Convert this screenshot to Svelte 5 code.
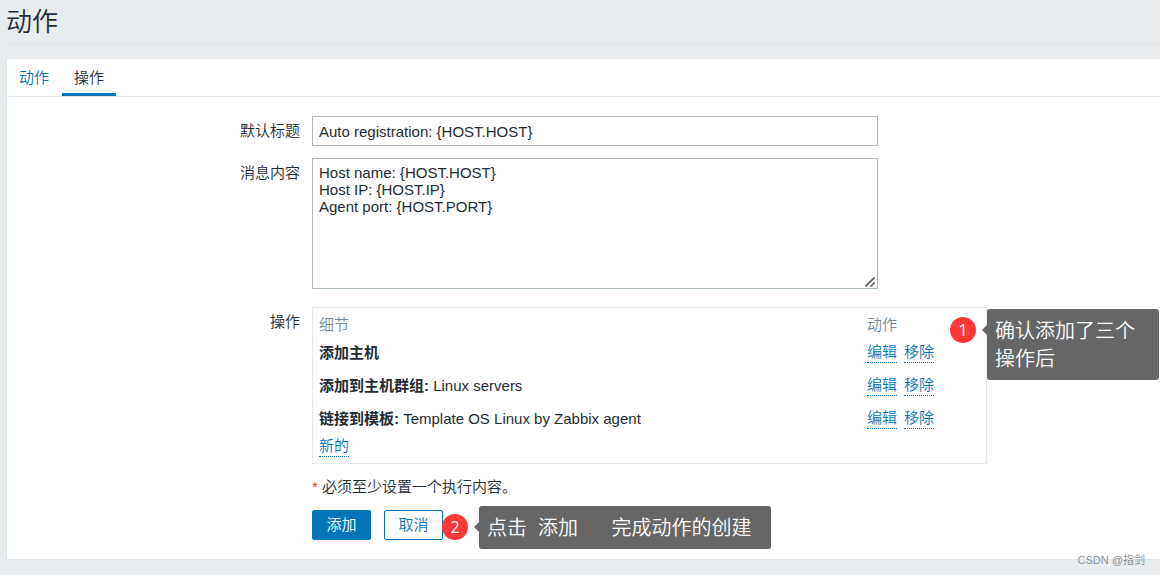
<script>
  let subject = $state('Auto registration: {HOST.HOST}');
  let message = $state('Host name: {HOST.HOST}\nHost IP: {HOST.IP}\nAgent port: {HOST.PORT}');

  const operations = [
    { kind: '添加主机', target: '' },
    { kind: '添加到主机群组:', target: 'Linux servers' },
    { kind: '链接到模板:', target: 'Template OS Linux by Zabbix agent' }
  ];
</script>

<div class="page">
  <header>
    <h1>动作</h1>
  </header>

  <main>
    <nav>
      <a class="tab" href="#action">动作</a>
      <a class="tab selected" href="#operations">操作</a>
    </nav>

    <form onsubmit={(e) => e.preventDefault()}>
      <label for="subject">默认标题</label>
      <input id="subject" type="text" bind:value={subject} />

      <label for="message">消息内容</label>
      <div class="area">
        <textarea id="message" bind:value={message}></textarea>
        <svg class="grip" viewBox="0 0 10 10" width="10" height="10" aria-hidden="true">
          <path d="M0.5 9.5 L9.5 0.5 M5.5 9.5 L9.5 5.5" fill="none" stroke="#555" stroke-width="1.6" />
        </svg>
      </div>

      <span class="label" id="ops-label">操作</span>
      <div class="operations">
        <table aria-labelledby="ops-label">
          <thead>
            <tr><th class="detail">细节</th><th>动作</th></tr>
          </thead>
          <tbody>
            {#each operations as op}
              <tr>
                <td><b>{op.kind}{op.target ? ' ' : ''}</b>{op.target}</td>
                <td>
                  <div class="links">
                    <button type="button" class="link">编辑</button>
                    <button type="button" class="link">移除</button>
                  </div>
                </td>
              </tr>
            {/each}
          </tbody>
          <tfoot>
            <tr><td colspan="2"><button type="button" class="link">新的</button></td></tr>
          </tfoot>
        </table>
        <span class="badge first">1</span>
        <div class="callout first">确认添加了三个<br />操作后</div>
      </div>

      <p class="note"><span class="star">*</span> 必须至少设置一个执行内容。</p>

      <div class="buttons">
        <button type="submit" class="btn primary">添加</button>
        <button type="button" class="btn">取消</button>
        <span class="badge second">2</span>
        <div class="callout second">{'点击  添加      完成动作的创建'}</div>
      </div>
    </form>
  </main>

  <div class="watermark">CSDN @指剑</div>
</div>

<style>
  :global(body) {
    background: #e9edf0;
  }

  .page {
    position: relative;
    box-sizing: border-box;
    min-height: 100vh;
    padding: 0 0 15px 6px;
    overflow: hidden;
    color: #1f2c33;
    font: 350 15px/22px "Liberation Sans", "Noto Sans CJK SC", sans-serif;
  }

  header {
    padding: 4px 0;
    margin-bottom: 13px;
    border-bottom: 1px solid #dfe4e7;
  }

  h1 {
    margin: 0;
    font-size: 26px;
    line-height: 36px;
    font-weight: 350;
  }

  main {
    background: #fff;
    border: 1px solid #dfe4e7;
    border-right: 0;
  }

  nav {
    display: flex;
    gap: 1px;
    border-bottom: 1px solid #e6eaed;
  }

  .tab {
    padding: 8px 12px 4px;
    border-bottom: 3px solid transparent;
    color: #0275b8;
    text-decoration: none;
  }

  .tab.selected {
    border-color: #0275b8;
    color: #1f2c33;
  }

  form {
    display: grid;
    grid-template-columns: 293px minmax(0, 1fr);
    column-gap: 12px;
    padding: 19px 0;
  }

  label,
  .label {
    padding-top: 4px;
    text-align: right;
  }

  input,
  textarea {
    box-sizing: border-box;
    display: block;
    width: 100%;
    margin: 0;
    border: 1px solid #acbbc2;
    border-radius: 0;
    outline: 0;
    background: #fff;
    color: inherit;
    font: inherit;
  }

  input {
    max-width: 566px;
    height: 30px;
    margin-bottom: 12px;
    padding: 0 6px;
  }

  .area {
    position: relative;
    max-width: 566px;
    margin-bottom: 18px;
  }

  textarea {
    height: 131px;
    padding: 5px 6px;
    line-height: 17px;
    resize: none;
  }

  .grip {
    position: absolute;
    right: 3px;
    bottom: 2px;
  }

  .operations {
    position: relative;
    box-sizing: border-box;
    width: 100%;
    max-width: 675px;
    padding: 6px;
    border: 1px solid #e6eaed;
  }

  table {
    width: 100%;
    table-layout: fixed;
    border-collapse: collapse;
  }

  th,
  td {
    height: 22px;
    padding: 0;
    text-align: left;
  }

  th {
    color: #768d99;
    font-weight: 350;
  }

  .detail {
    width: 548px;
  }

  tbody td {
    height: 33px;
  }

  b {
    font-weight: 700;
    white-space: pre;
  }

  .links {
    display: flex;
    gap: 7px;
  }

  .link {
    display: block;
    padding: 0;
    border: 0;
    border-bottom: 1px dotted #0275b8;
    background: none;
    color: #0275b8;
    font: inherit;
    line-height: 20px;
    cursor: pointer;
  }

  .note,
  .buttons {
    grid-column: 2;
  }

  .note {
    margin: 12px 0;
  }

  .star {
    color: #e33734;
  }

  .buttons {
    position: relative;
    display: flex;
    gap: 13px;
  }

  .btn {
    min-width: 59px;
    height: 30px;
    padding: 0 13px;
    border: 1px solid #0275b8;
    border-radius: 2px;
    background: #fff;
    color: #0275b8;
    font: inherit;
    cursor: pointer;
  }

  .btn.primary {
    background: #0275b8;
    color: #fff;
  }

  .badge {
    position: absolute;
    width: 26px;
    border-radius: 50%;
    background: #fe3737;
    color: #fff;
    font: 16px/26px "Open Sans", sans-serif;
    text-align: center;
  }

  .badge.first {
    top: 9px;
    left: 637px;
  }

  .badge.second {
    top: 4px;
    left: 130px;
  }

  .callout {
    position: absolute;
    padding: 8px 8px 7px;
    border-radius: 3px;
    background: #666;
    color: #fff;
    font-size: 20px;
    line-height: 28px;
    white-space: pre;
  }

  .callout::before {
    content: "";
    position: absolute;
    top: 16px;
    right: 100%;
    border: 5px solid transparent;
    border-left: 0;
    border-right-color: #666;
  }

  .callout.first {
    top: 1px;
    left: 674px;
    padding-right: 24px;
  }

  .callout.second {
    top: -4px;
    left: 167px;
    padding-right: 20px;
  }

  .watermark {
    position: absolute;
    right: 15px;
    bottom: 5px;
    color: #8b8e91;
    font-size: 11px;
    line-height: 20px;
  }
</style>
